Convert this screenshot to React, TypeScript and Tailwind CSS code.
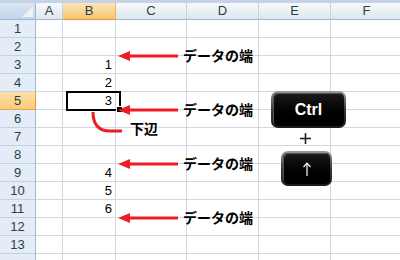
import React from "react";

const cols = ["A", "B", "C", "D", "E", "F"];
const rows = Array.from({ length: 14 }, (_, i) => i + 1);
const values: Record<number, string> = { 3: "1", 4: "2", 5: "3", 9: "4", 10: "5", 11: "6" };
const arrowYs = [56, 110, 164, 218];

function Key({ cls, children }: { cls: string; children: React.ReactNode }) {
  return (
    <div className={`absolute rounded-[7px] bg-gradient-to-b from-[#9a9a9a] via-[#3a3a3a] to-[#1a1a1a] p-[2px] ${cls}`}>
      <div className="flex h-full w-full items-center justify-center rounded-[5px] bg-gradient-to-b from-[#1c1c1c] to-black shadow-[inset_1px_1px_0_#555]">
        {children}
      </div>
    </div>
  );
}

export default function App() {
  return (
    <div className="relative h-[260px] w-[400px] overflow-hidden bg-white font-['Liberation_Sans',sans-serif]">
      <div className="h-[3px] w-full bg-[#c5d3e7]" />
      <div className="flex">
        <div className="h-[257px] w-[4px] bg-[#a9c3e8]" />
        <div className="grid grid-cols-[36px_27px_53px_71px_72px_72px_72px] grid-rows-[17px_repeat(14,18px)]">
          <div className="relative border-b border-r border-[#9eb6ce] bg-gradient-to-b from-[#dbe5f3] to-[#c3d4ec]">
            <svg className="absolute bottom-[2px] right-[2px]" width="11" height="11"><polygon points="11,0 11,11 0,11" fill="#eef2f7" /></svg>
          </div>
          {cols.map((c) => (
            <div
              key={c}
              className={
                c === "B"
                  ? "flex items-center justify-center border-b border-r border-b-[#f29536] border-r-[#e9b260] bg-gradient-to-b from-[#fae6bd] to-[#f5c46c] text-[13px] text-[#2c3e45]"
                  : "flex items-center justify-center border-b border-r border-b-[#9eb6ce] border-r-[#c5d1df] bg-gradient-to-b from-[#f7f9fc] to-[#dfe6ef] text-[13px] text-[#2c3e45]"
              }
            >
              {c}
            </div>
          ))}
          {rows.map((r) => (
            <React.Fragment key={r}>
              <div
                className={
                  r === 5
                    ? "flex items-center justify-center border-b border-r border-b-[#e9a64b] border-r-[#f29536] bg-gradient-to-b from-[#fde2a8] to-[#f9cb7a] text-[13px] text-[#2c3e45]"
                    : "flex items-center justify-center border-b border-r border-b-[#c5d1df] border-r-[#9eb6ce] bg-[#e4ecf7] text-[13px] text-[#2c3e45]"
                }
              >
                {r <= 13 ? r : ""}
              </div>
              {cols.map((c) => (
                <div
                  key={c}
                  className="flex items-end justify-end border-b border-r border-[#d0d7e5] pr-[3px] text-[13px] leading-[16px] text-black"
                >
                  {c === "B" ? values[r] ?? "" : ""}
                </div>
              ))}
            </React.Fragment>
          ))}
        </div>
      </div>

      {/* selected cell B5 */}
      <div className="absolute left-[66px] top-[91px] h-[20px] w-[55px] border-2 border-black" />
      <div className="absolute left-[117px] top-[107px] h-[5px] w-[5px] bg-black outline outline-1 outline-white" />

      {/* arrows */}
      <svg className="absolute left-0 top-0" width="400" height="260">
        {arrowYs.map((y) => (
          <g key={y}>
            <line x1="126" y1={y} x2="178" y2={y} stroke="#ee1c24" strokeWidth="3" />
            <polygon points={`118,${y} 130,${y - 5} 130,${y + 5}`} fill="#ee1c24" />
          </g>
        ))}
        <path d="M 93 112 C 93 124, 98 131, 110 131 L 122 131" fill="none" stroke="#ee1c24" strokeWidth="3" />
      </svg>

      {arrowYs.map((y) => (
        <div
          key={y}
          className="absolute left-[183px] text-[14px] font-bold leading-[14px] text-black font-['Noto_Sans_CJK_JP',sans-serif]"
          style={{ top: y - 8 }}
        >
          データの端
        </div>
      ))}
      <div className="absolute left-[130px] top-[121px] text-[14px] font-bold leading-[14px] text-black font-['Noto_Sans_CJK_JP',sans-serif]">
        下辺
      </div>

      {/* keys */}
      <Key cls="left-[271px] top-[91px] h-[37px] w-[75px]">
        <span className="text-[16px] font-bold text-white">Ctrl</span>
      </Key>
      <svg className="absolute left-[299px] top-[132px]" width="13" height="13">
        <line x1="6.5" y1="1" x2="6.5" y2="12" stroke="#222" strokeWidth="1.6" />
        <line x1="1" y1="6.5" x2="12" y2="6.5" stroke="#222" strokeWidth="1.6" />
      </svg>
      <Key cls="left-[281px] top-[151px] h-[35px] w-[51px]">
        <svg width="10" height="14" viewBox="0 0 10 14">
          <line x1="5" y1="1.5" x2="5" y2="14" stroke="#fff" strokeWidth="1.2" />
          <polyline points="1.5,5 5,1.2 8.5,5" fill="none" stroke="#fff" strokeWidth="1.2" />
        </svg>
      </Key>
    </div>
  );
}
